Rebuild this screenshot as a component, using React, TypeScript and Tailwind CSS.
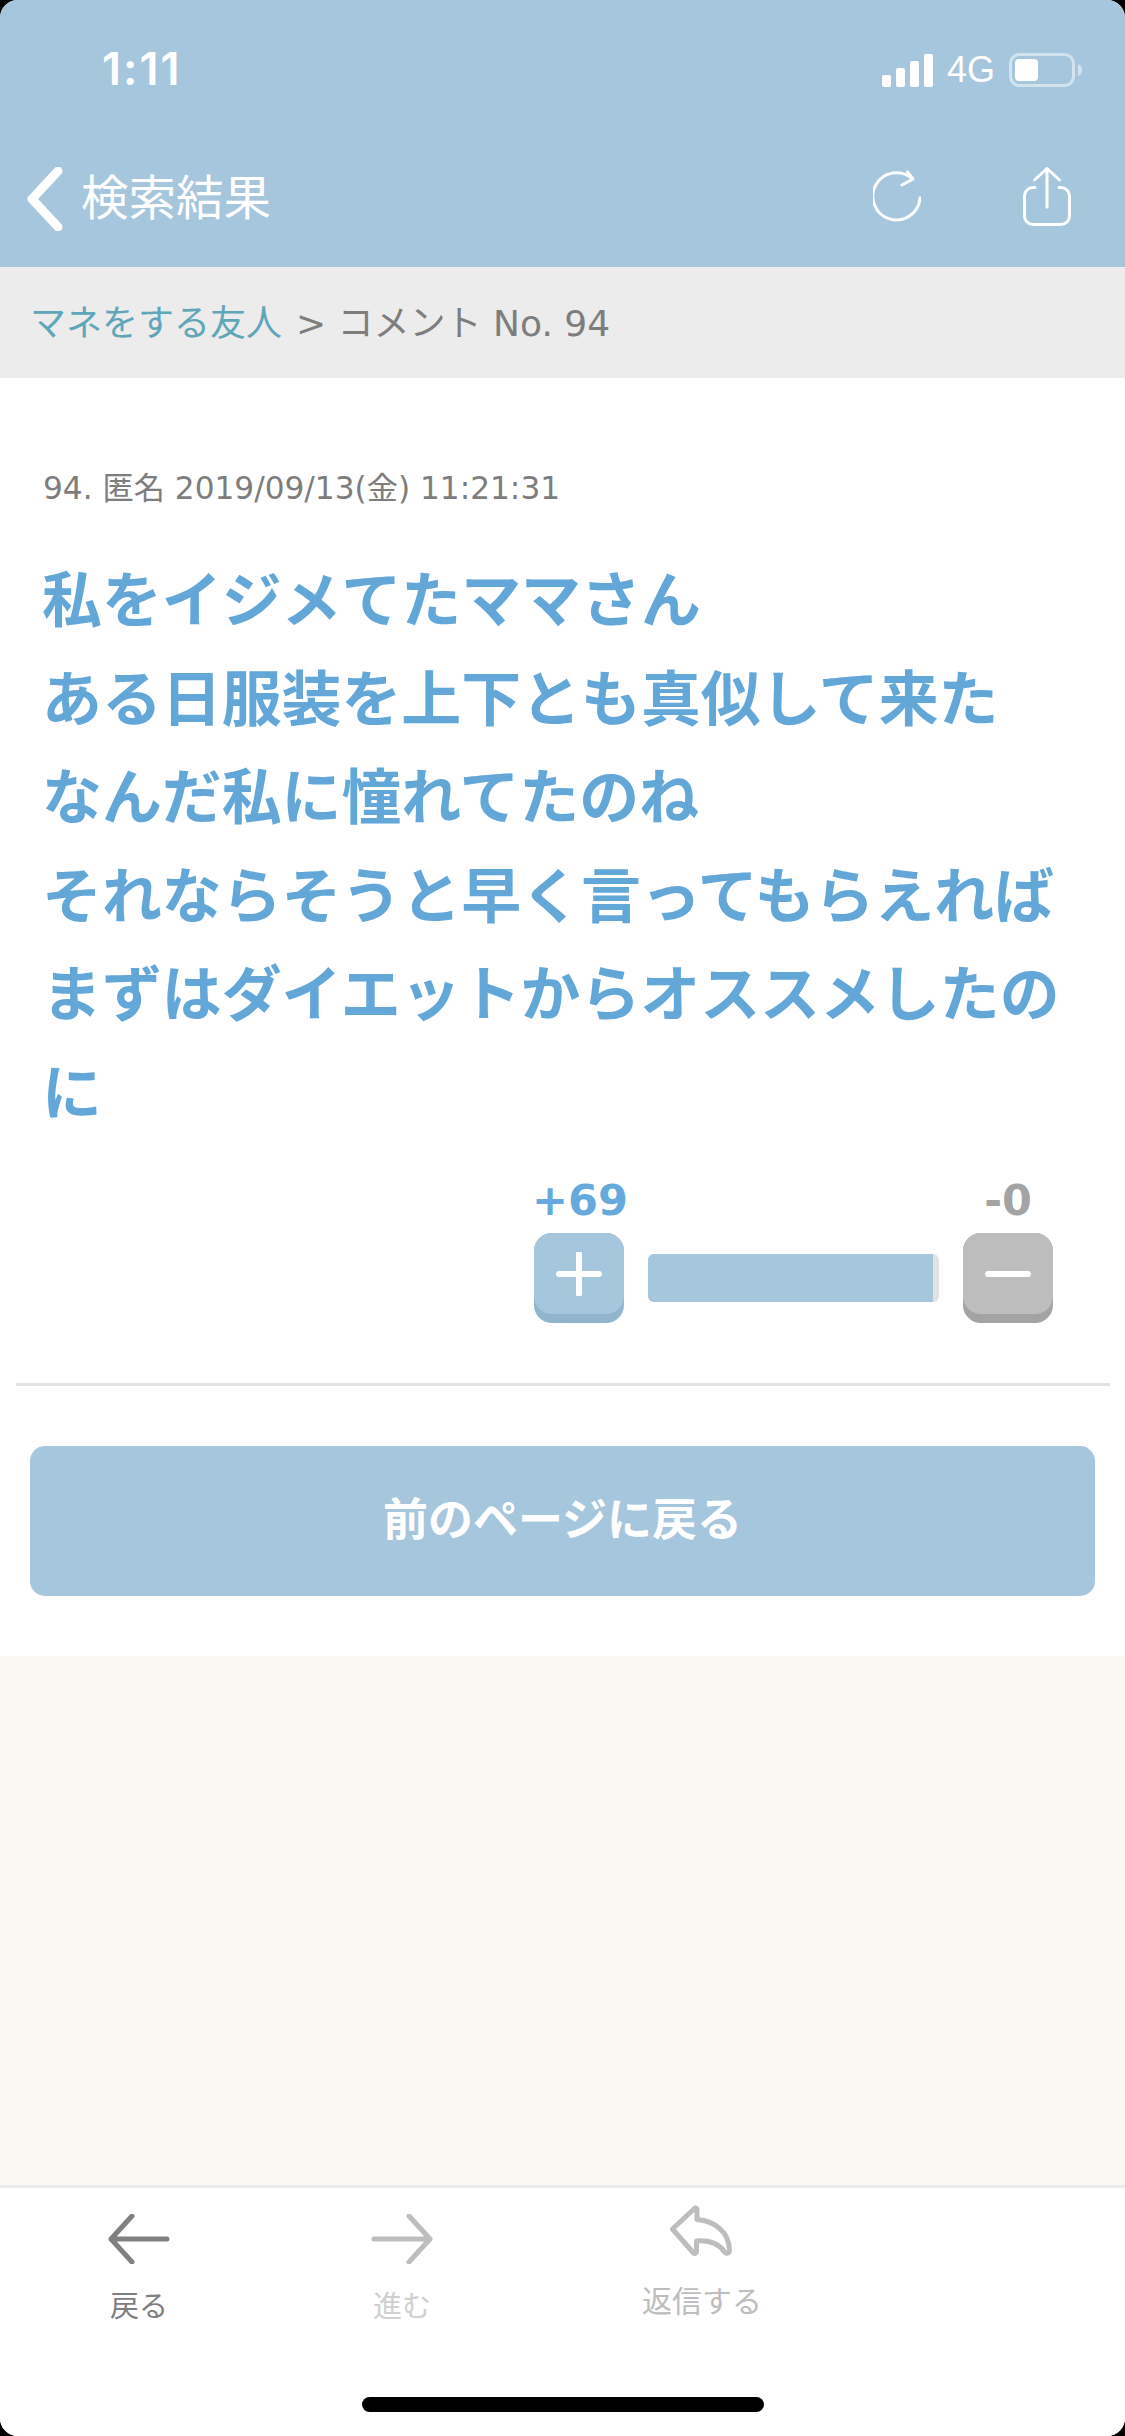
const cjk = "font-['DejaVu_Sans','Noto_Sans_CJK_JP',sans-serif]";

function StatusBar() {
  return (
    <div className="flex h-[138px] items-start justify-between pl-[102px] pr-[43px] pt-[44px] text-white">
      <span className="font-['Inter',sans-serif] text-[45px] leading-[50px] font-semibold tracking-[2px]">1:11</span>
      <div className="flex items-center gap-[14px] pt-[6px]">
        <svg width="51" height="33" viewBox="0 0 51 33" fill="white">
          <rect x="0" y="21" width="9" height="12" rx="2" />
          <rect x="14" y="14" width="9" height="19" rx="2" />
          <rect x="28" y="7" width="9" height="26" rx="2" />
          <rect x="42" y="0" width="9" height="33" rx="2" />
        </svg>
        <span className="font-['Liberation_Sans',sans-serif] text-[36px] leading-[40px]">4G</span>
        <svg width="73" height="34" viewBox="0 0 73 34" fill="none">
          <rect x="1.5" y="1.5" width="63" height="31" rx="9" stroke="#ffffff" strokeOpacity="0.5" strokeWidth="3" />
          <rect x="6" y="6" width="23" height="22" rx="4" fill="white" />
          <path d="M69 11c3 1 4 3 4 6s-1 5-4 6z" fill="#ffffff" fillOpacity="0.5" />
        </svg>
      </div>
    </div>
  );
}

function NavBar() {
  return (
    <div className="flex h-[129px] items-start justify-between pl-[27px] pr-[53px] pt-[28px] text-white">
      <div className="flex items-start gap-[18px]">
        <svg width="36" height="64" viewBox="0 0 36 64" fill="none" className="mt-[1px]">
          <path d="M31 4 5 32l26 28" stroke="white" strokeWidth="9" strokeLinecap="round" strokeLinejoin="round" />
        </svg>
        <span className={`${cjk} mt-[3px] text-[47.5px] leading-[60px] font-normal`}>検索結果</span>
      </div>
      <div className="flex items-start gap-[101px]">
        <svg width="48" height="54" viewBox="0 0 48 54" fill="none" className="mt-[4px]">
          <path d="M39.5 9A23.6 23.6 0 1 0 47 28" stroke="white" strokeWidth="3" strokeLinecap="round" />
          <path d="M34.5 2 40 9l-11 6" stroke="white" strokeWidth="3" strokeLinecap="round" strokeLinejoin="round" />
        </svg>
        <svg width="50" height="62" viewBox="0 0 50 62" fill="none">
          <path d="M13 21.5h-2A8.5 8.5 0 0 0 2.500 30v20a8.500 8.500 0 0 0 8.500 8.500h28a8.500 8.500 0 0 0 8.500-8.500V30a8.500 8.500 0 0 0-8.500-8.500h-2" stroke="white" strokeWidth="3" strokeLinecap="round" />
          <path d="M25 41V2.500M12.500 14 25 2.500 37.500 14" stroke="white" strokeWidth="3" strokeLinecap="round" strokeLinejoin="round" />
        </svg>
      </div>
    </div>
  );
}

function VoteButton({ shade, face, minus }: { shade: string; face: string; minus?: boolean }) {
  return (
    <div className={`h-[90px] w-[90px] rounded-[18px] ${shade}`}>
      <div className={`flex h-[81px] items-center justify-center rounded-[18px] ${face}`}>
        <svg width="46" height="44" viewBox="0 0 46 44" fill="none">
          <path d={minus ? "M3 22h40" : "M3 22h40M23 2v40"} stroke="white" strokeWidth="6" strokeLinecap="round" />
        </svg>
      </div>
    </div>
  );
}

function Votes() {
  return (
    <div className="flex flex-col items-end pr-[72px]">
      <div className={`${cjk} flex w-[519px] justify-between pr-[21px] text-[43px] leading-[48px] font-bold`}>
        <span className="-ml-[2px] text-[#66aadd]">+69</span>
        <span className="text-[#a3a3a3]">-0</span>
      </div>
      <div className="mt-[9px] flex w-[519px] items-start justify-between">
        <VoteButton shade="bg-[#92b5cf]" face="bg-[#a5c6dd]" />
        <div className="mt-[21px] h-[48px] w-[291px] overflow-hidden rounded-[6px] bg-[#e2e2e2]">
          <div className="h-full w-[285px] bg-[#a5c6dd]" />
        </div>
        <VoteButton shade="bg-[#a3a3a3]" face="bg-[#bdbdbd]" minus />
      </div>
    </div>
  );
}

function Comment() {
  return (
    <section className={`${cjk} bg-white`}>
      <p className="pl-[43px] pt-[92px] text-[31.2px] leading-[36px] text-[#7d7d7d]">94. 匿名 2019/09/13(金) 11:21:31</p>
      <p className="mt-[46px] pl-[42px] pr-[30px] text-[59.9px] leading-[98.5px] font-bold text-[#63a7d9]">
        私をイジメてたママさん
        <br />
        ある日服装を上下とも真似して来た
        <br />
        なんだ私に憧れてたのね
        <br />
        それならそうと早く言ってもらえれば
        <br />
        まずはダイエットからオススメしたの
        <br />
        に
      </p>
      <div className="mt-[33px]">
        <Votes />
      </div>
      <div className="ml-[16px] mr-[15px] mt-[60px] h-[3px] bg-[#e2e2e2]" />
      <div className="px-[30px] pb-[60px] pt-[60px]">
        <div className="flex h-[150px] items-center justify-center rounded-[15px] bg-[#a5c6dd] text-[45px] font-bold text-white">
          前のページに戻る
        </div>
      </div>
    </section>
  );
}

function TabBar() {
  return (
    <div className={`${cjk} relative h-[251px] border-t-[3px] border-[#ececec] bg-white`}>
      <div className="flex items-start pt-[26px]">
        <div className="ml-[108px] flex w-[62px] flex-col items-center text-[#808080]">
          <svg width="62" height="50" viewBox="0 0 62 50" fill="none">
            <path d="M24 2 3 25l21 23M3 25h56" stroke="#808080" strokeWidth="5" strokeLinecap="round" strokeLinejoin="round" />
          </svg>
          <span className="mt-[25px] text-[29px] leading-[36px]">戻る</span>
        </div>
        <div className="ml-[201px] flex w-[62px] flex-col items-center text-[#d0d0d0]">
          <svg width="62" height="50" viewBox="0 0 62 50" fill="none">
            <path d="m38 2 21 23-21 23M59 25H3" stroke="#bdbdbd" strokeWidth="5" strokeLinecap="round" strokeLinejoin="round" />
          </svg>
          <span className="mt-[25px] text-[29px] leading-[36px]">進む</span>
        </div>
        <div className="-mt-[10px] ml-[207px] flex w-[124px] flex-col items-center text-[#bdbdbd]">
          <svg width="66" height="56" viewBox="0 0 66 56" fill="none">
            <path d="M25.500 4.500 3.500 25l21 24c1 1 3 0 3-1.500V37C40 36 50 40 55.500 48c1.500 2 5 1.500 5-2C60 28 46 17 28 15.500v-10c0-1.500-1.500-2-2.500-1Z" stroke="#bdbdbd" strokeWidth="5" strokeLinejoin="round" />
          </svg>
          <span className="mt-[24px] text-[30px] leading-[36px]">返信する</span>
        </div>
      </div>
      <div className="absolute bottom-[24px] left-[362px] h-[15px] w-[402px] rounded-full bg-black" />
    </div>
  );
}

export default function App() {
  return (
    <div className="h-[2436px] w-[1125px] bg-black">
      <div className="flex h-full flex-col overflow-hidden rounded-[18px] bg-[#fbf8f1]">
        <header className="bg-[#a5c6dd]">
          <StatusBar />
          <NavBar />
        </header>
        <div className={`${cjk} flex h-[111px] items-center gap-[14px] bg-[#ececec] pl-[30px] pt-[2px] text-[36px] text-[#7d7d7d]`}>
          <span className="text-[#5fa6ba]">マネをする友人</span>
          <span>&gt; コメント No. 94</span>
        </div>
        <Comment />
        <div className="flex-1" />
        <TabBar />
      </div>
    </div>
  );
}
